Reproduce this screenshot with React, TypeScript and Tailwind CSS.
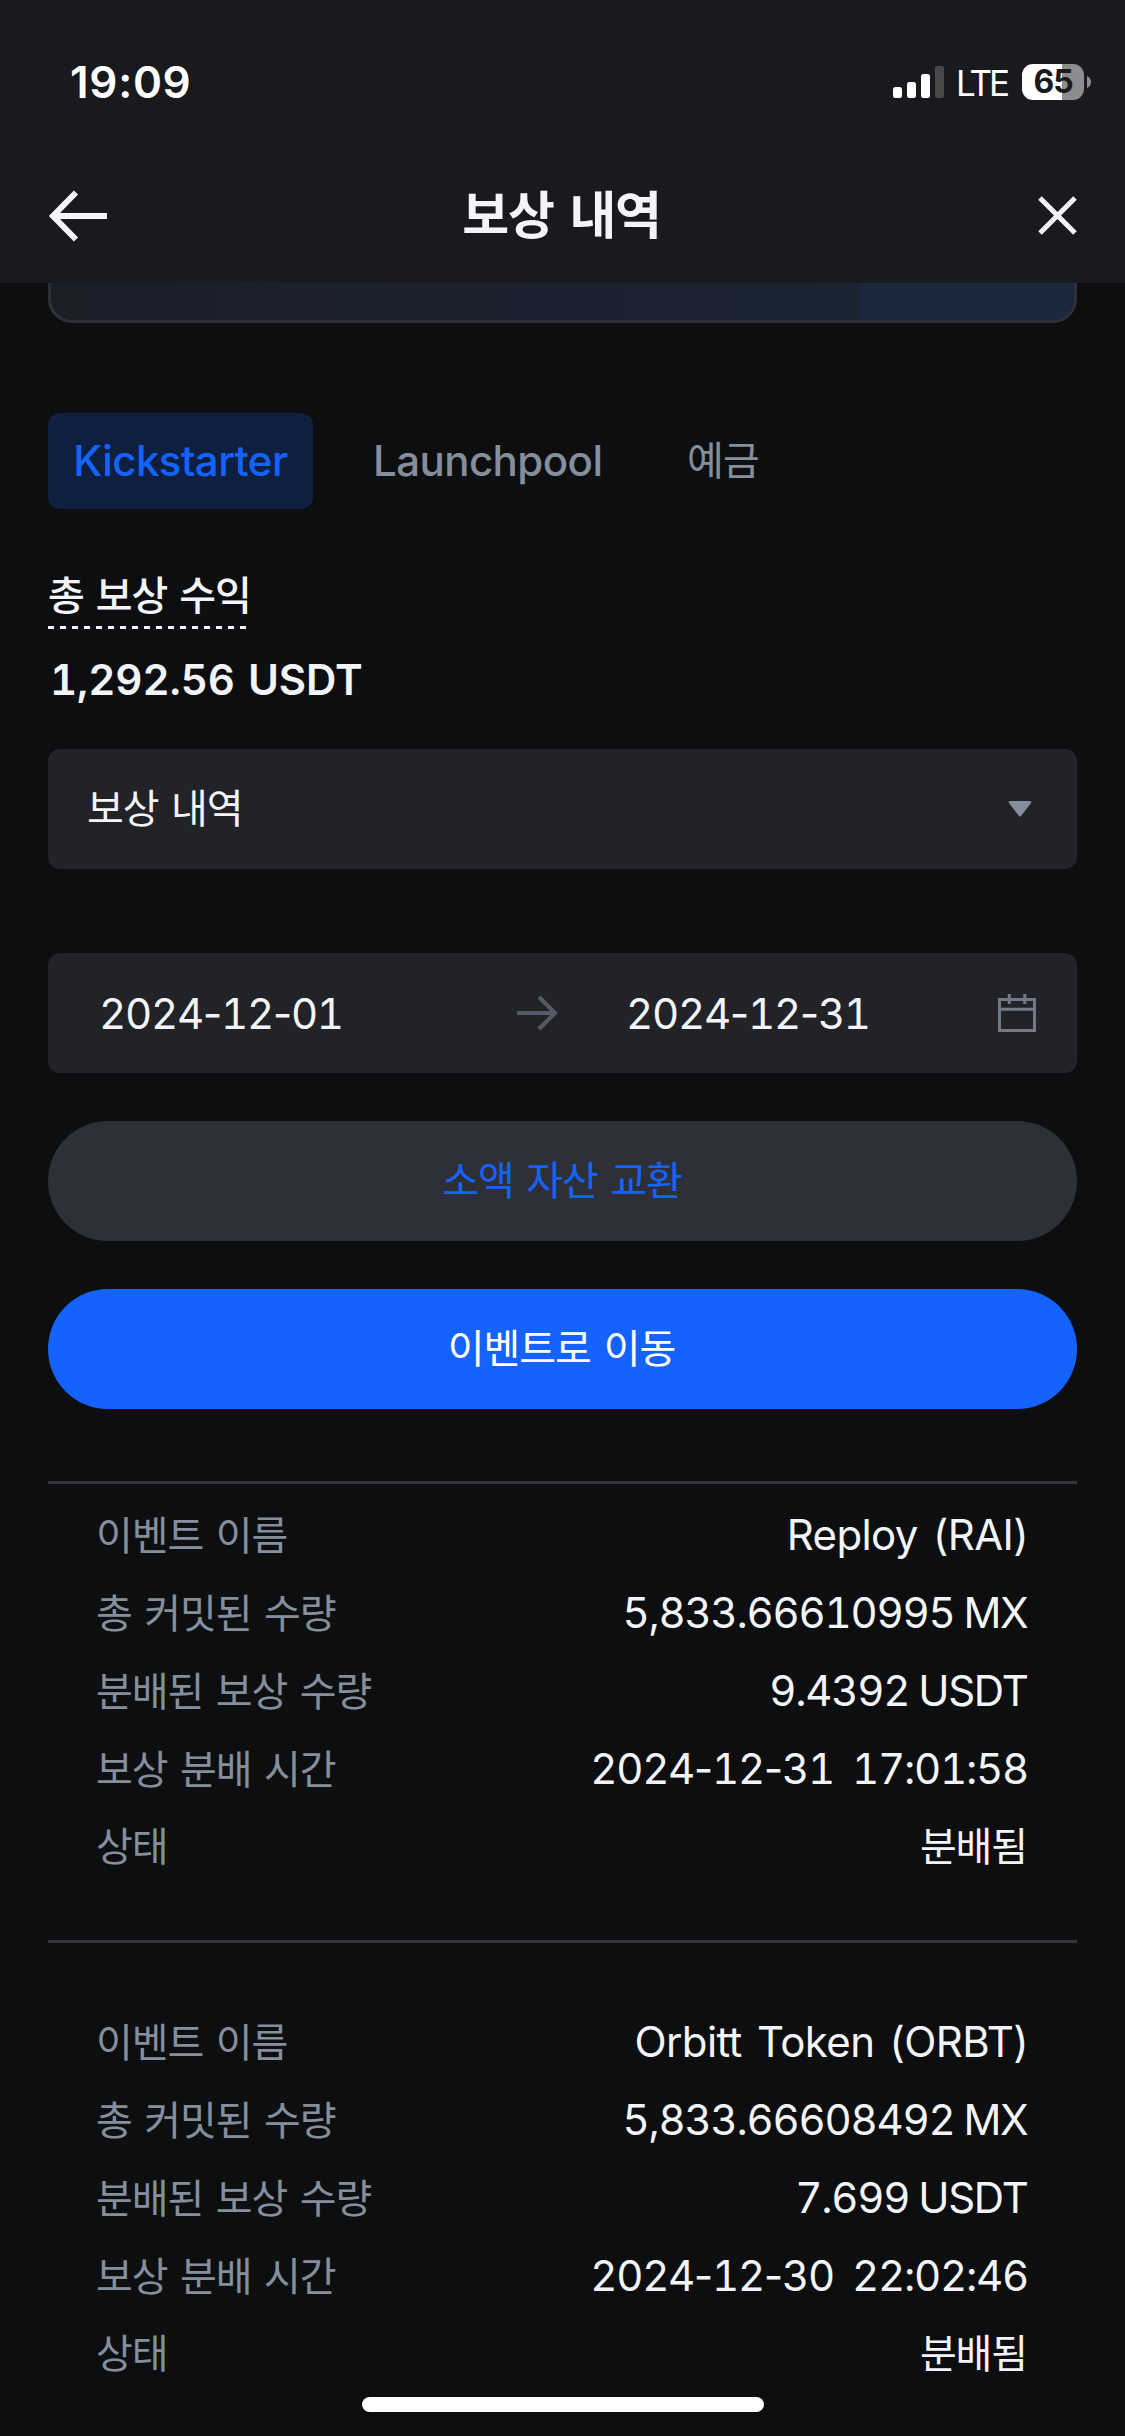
type Reward = {
  name: string;
  committed: string;
  distributed: string;
  time: string;
  status: string;
};

const rewards: Reward[] = [
  {
    name: "Reploy (RAI)",
    committed: "5,833.66610995",
    distributed: "9.4392",
    time: "2024-12-31 17:01:58",
    status: "분배됨",
  },
  {
    name: "Orbitt Token (ORBT)",
    committed: "5,833.66608492",
    distributed: "7.699",
    time: "2024-12-30 22:02:46",
    status: "분배됨",
  },
];

const StatusBar = () => {
  return (
    <div className="flex h-[148px] items-start justify-between pt-16 pr-[34px] pl-[70px] text-white">
      <span className="h-9 text-[44px] leading-[36px] font-semibold tracking-[0.7px]">
        19:09
      </span>
      <div className="flex h-9 items-center">
        <svg width="51" height="32" viewBox="0 0 51 32" fill="#fff">
          <rect x="0" y="21" width="9" height="11" rx="2.5" />
          <rect x="14" y="16" width="9" height="16" rx="2.5" />
          <rect x="28" y="8" width="9" height="24" rx="2.5" />
          <rect x="42" y="0" width="9" height="32" rx="2.5" fill="#47484a" />
        </svg>
        <span className="ml-[12px] w-[53px] pt-[2px] text-[35px] leading-[36px] tracking-[-3px]">
          LTE
        </span>
        <div className="ml-[13px] flex h-9 w-[62px] items-center justify-center rounded-[11px] bg-linear-to-r from-white from-65% to-[#8c8d8e] to-65% text-[32px] leading-[36px] font-bold tracking-[-1px] text-[#191a1d]">
          65
        </div>
        <svg className="ml-[3px]" width="4" height="12" viewBox="0 0 4 12">
          <path d="M0 0c2.500 1 4 3.200 4 6s-1.500 5-4 6z" fill="#8c8d8e" />
        </svg>
      </div>
    </div>
  );
};

const Header = () => {
  return (
    <div className="h-[283px] bg-[#191a1d]">
      <StatusBar />
      <div className="flex h-[135px] items-center justify-between pr-[48px] pl-[48px] text-[#f3f4f7]">
        <svg
          width="60"
          height="52"
          viewBox="0 0 60 52"
          fill="none"
          stroke="currentColor"
          strokeWidth="6"
        >
          <path d="M59 26H5M28 2.500 5 26l23 23.500" />
        </svg>
        <h1 className="pr-0.5 text-[51px] leading-[60px] font-bold tracking-[-1.3px] [word-spacing:5px]">
          보상 내역
        </h1>
        <div className="flex w-[60px] justify-end">
          <svg
            width="39"
            height="39"
            viewBox="0 0 39 39"
            fill="none"
            stroke="currentColor"
            strokeWidth="5"
          >
            <path d="M2 2l35 35M37 2 2 37" />
          </svg>
        </div>
      </div>
    </div>
  );
};

const Tabs = () => {
  return (
    <div className="mt-[90px] flex h-24 items-center text-[42px] font-medium tracking-[-0.55px] text-[#848e9c]">
      <div className="flex h-24 w-[265px] items-center justify-center rounded-xl bg-[#0f1f40] pb-0.5 text-[#1563ff]">
        Kickstarter
      </div>
      <div className="ml-[60px] w-[230px] pb-0.5">Launchpool</div>
      <div className="ml-[84px] text-[40px] font-normal tracking-[-0.8px]">
        예금
      </div>
    </div>
  );
};

const DateText = ({ value }: { value: string }) => {
  return (
    <span className="tracking-[-1.25px] tabular-nums [word-spacing:8px]">
      {value.split("-").map((part, i) => (
        <span key={i}>
          {i > 0 && <span className="-mx-[4px]">-</span>}
          {part}
        </span>
      ))}
    </span>
  );
};

const DateRange = () => {
  return (
    <div className="mt-[84px] flex h-[120px] items-center rounded-xl bg-[#222327] pr-[40px] pl-[51px] text-[42px]">
      <div className="w-[418px]">
        <DateText value="2024-12-01" />
      </div>
      <svg
        width="41"
        height="36"
        viewBox="0 0 41 36"
        fill="none"
        stroke="#555b66"
        strokeWidth="4"
      >
        <path d="M0 18h38M22 2l16 16-16 16" />
      </svg>
      <div className="ml-[68px] flex-1">
        <DateText value="2024-12-31" />
      </div>
      <svg
        width="39"
        height="38"
        viewBox="0 0 39 38"
        fill="none"
        stroke="#727a88"
        strokeWidth="3"
      >
        <path d="M1.500 5.500h35v31h-35zM1.500 15.300h35M11.300 0v10M26.800 0v10" />
      </svg>
    </div>
  );
};

const Row = ({
  label,
  children,
}: {
  label: string;
  children: React.ReactNode;
}) => {
  return (
    <div className="flex h-[78px] items-baseline justify-between text-[42px] leading-[78px]">
      <span className="text-[40px] tracking-[-1.1px] text-[#848e9c] [word-spacing:2.500px]">
        {label}
      </span>
      {children}
    </div>
  );
};

const Amount = ({ value, unit }: { value: string; unit: string }) => {
  return (
    <span className="pr-[1.500px] tracking-[-1.25px] tabular-nums">
      {value}
      <span className="ml-[9px]">{unit}</span>
    </span>
  );
};

const App = () => {
  return (
    <div
      lang="ko"
      className="flex h-[2436px] w-[1125px] flex-col overflow-hidden bg-[#0d0e10] font-['Inter','Noto_Sans_CJK_KR',sans-serif] text-[#f3f4f7]"
    >
      <Header />
      <div className="px-12">
        {/* bottom edge of the banner scrolled under the header */}
        <div className="flex h-10 overflow-hidden rounded-b-[24px] border-3 border-t-0 border-[#2e3036] bg-linear-to-r from-[#1b1e27] via-[#1a212e] to-[#1a2536]">
          <div className="flex-1" />
          <div className="w-[213px] bg-[#1b273d]" />
        </div>

        <Tabs />

        <div className="mt-[62px] flex h-[58px] w-[198px] flex-col justify-between">
          <span className="text-[40px] leading-[50px] font-medium whitespace-nowrap tracking-[-1.1px] [word-spacing:2.500px]">
            총 보상 수익
          </span>
          <div className="h-[3px] bg-[repeating-linear-gradient(90deg,#f3f4f7_0_6px,transparent_6px_12px)]" />
        </div>
        <div className="mt-[26px] h-[50px] pl-0.5 text-[42px] leading-[50px] font-semibold tracking-[-0.1px] tabular-nums [word-spacing:2px]">
          1,292.56 USDT
        </div>

        <div className="mt-[44px] flex h-[120px] items-center justify-between rounded-xl bg-[#222327] pr-[45px] pl-[39px]">
          <span className="pb-px text-[40px] tracking-[-1.1px] [word-spacing:2.500px]">
            보상 내역
          </span>
          <svg width="24" height="16" viewBox="0 0 24 16" fill="#848e9c">
            <path d="M1.500 0h21q1.500 1 .5 2L13 15q-1 1-2 0L1 2Q0 1 1.500 0z" />
          </svg>
        </div>

        <DateRange />

        <button className="mt-12 flex h-[120px] w-full items-center justify-center rounded-full bg-[#2e3038] pr-px pb-px text-[40px] tracking-[-1.1px] text-[#1563ff] [word-spacing:2.500px]">
          소액 자산 교환
        </button>
        <button className="mt-12 flex h-[120px] w-full items-center justify-center rounded-full bg-[#1563ff] pr-0.5 pb-px text-[40px] tracking-[-1px] text-white [word-spacing:2.500px]">
          이벤트로 이동
        </button>

        <div className="mt-[72px]">
          {rewards.map((reward, i) => (
            <div
              key={reward.name}
              className={
                i === 0
                  ? "h-[459px] border-t-3 border-[#33343c] px-12 pt-[12px]"
                  : "border-t-3 border-[#33343c] px-12 pt-[60px]"
              }
            >
              <Row label="이벤트 이름">
                <span className="pr-px tracking-[-0.6px] [word-spacing:4px]">
                  {reward.name}
                </span>
              </Row>
              <Row label="총 커밋된 수량">
                <Amount value={reward.committed} unit="MX" />
              </Row>
              <Row label="분배된 보상 수량">
                <Amount value={reward.distributed} unit="USDT" />
              </Row>
              <Row label="보상 분배 시간">
                <span className="pr-px">
                  <DateText value={reward.time} />
                </span>
              </Row>
              <Row label="상태">
                <span className="pr-0.5 text-[40px] tracking-[-1.1px]">
                  {reward.status}
                </span>
              </Row>
            </div>
          ))}
        </div>
      </div>
      {/* home indicator */}
      <div className="absolute top-[2397px] left-[362px] h-[15px] w-[402px] rounded-full bg-white" />
    </div>
  );
};

export default App;
